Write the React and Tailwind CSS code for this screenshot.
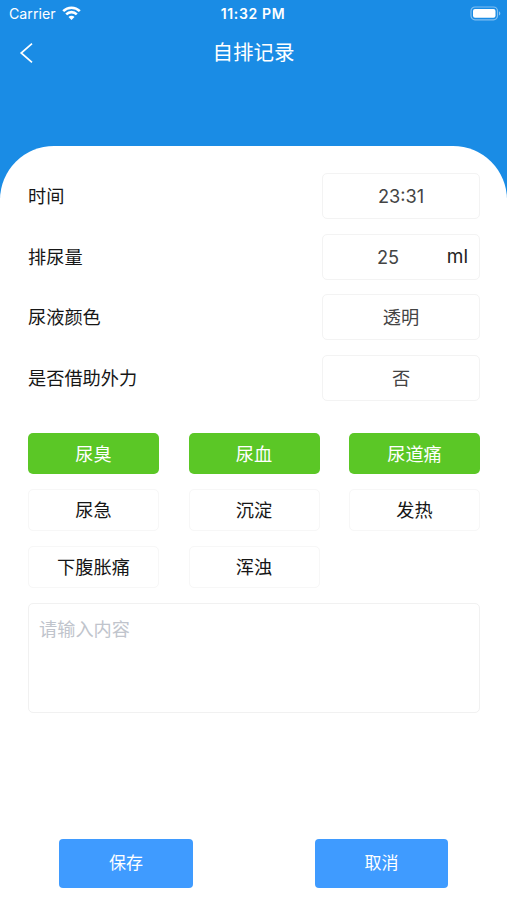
import clsx from "clsx";

const campos = [
  { label: "时间", valor: "23:31" },
  { label: "排尿量", valor: "25", unidade: "ml" },
  { label: "尿液颜色", valor: "透明" },
  { label: "是否借助外力", valor: "否" },
];

const sintomas = [
  { nome: "尿臭", ativo: true },
  { nome: "尿血", ativo: true },
  { nome: "尿道痛", ativo: true },
  { nome: "尿急" },
  { nome: "沉淀" },
  { nome: "发热" },
  { nome: "下腹胀痛" },
  { nome: "浑浊" },
];

function StatusBar() {
  return (
    <div className="grid grid-cols-3 items-center h-[28px] pl-[9px] pr-[6px] text-white">
      <div className="flex items-center gap-[6px]">
        <span className="text-[14.2px] leading-none">Carrier</span>
        <svg width="19" height="14" viewBox="0 0 19 14" className="-mt-[2px]" fill="none" stroke="currentColor" strokeWidth="2.6">
          <path d="M1.2 5.1a11.8 11.8 0 0 1 16.6 0" />
          <path d="M4.2 8.3a7.5 7.5 0 0 1 10.6 0" />
          <path d="M9.5 13.9 6.5 10.9a4.2 4.2 0 0 1 6 0z" fill="currentColor" stroke="none" />
        </svg>
      </div>
      <span className="-ml-[4px] text-center text-[14px] leading-none font-semibold tracking-[0.65px]">11:32 PM</span>
      <svg className="justify-self-end -mt-[2px]" width="31" height="15" viewBox="0 0 31 15" fill="none">
        <rect x="1" y="1" width="26.5" height="12.8" rx="4" stroke="#fff" strokeOpacity="0.45" strokeWidth="1.2" />
        <rect x="3" y="3" width="22.5" height="8.8" rx="2" fill="#fff" />
        <path d="M29 5.2c1.8.7 1.8 3.7 0 4.4z" fill="#fff" fillOpacity="0.5" />
      </svg>
    </div>
  );
}

export default function App() {
  return (
    <div className="h-[900px] w-[507px] overflow-hidden bg-white font-[Inter,'Noto_Sans_CJK_SC',sans-serif] text-[18.2px] text-[#161616]">
      {/* Header */}
      <header className="h-[198px] bg-[#1a8ce5]">
        <StatusBar />
        <div className="grid grid-cols-3 items-center h-[50px] pl-[19px] pr-[19px] text-white">
          <svg width="15" height="22" viewBox="0 0 15 22" fill="none" stroke="currentColor" strokeWidth="1.7">
            <path d="M13 1.6 2.2 11 13 20.4" />
          </svg>
          <h1 className="text-center text-[20.5px] leading-[50px]">自排记录</h1>
        </div>
      </header>

      <main className="-mt-[52px] h-[754px] rounded-t-[54px] bg-white pl-[28px] pr-[27px] pt-[27px]">
        {/* Campos */}
        <div className="flex flex-col gap-[14.5px]">
          {campos.map((c) => (
            <div key={c.label} className="flex items-center justify-between h-[46px]">
              <span className="leading-[46px]">{c.label}</span>
              <div className="flex items-center w-[158px] h-full rounded-[5px] border border-[#f3f3f3] pt-[2px] text-[#444]">
                {c.unidade && <span className="w-[24px]" />}
                <span className="flex-1 text-center">{c.valor}</span>
                {c.unidade && <span className="w-[50px] pr-[11px] pb-[1px] text-right text-[19px] text-[#222]">{c.unidade}</span>}
              </div>
            </div>
          ))}
        </div>

        {/* Sintomas */}
        <div className="mt-[31.5px] grid grid-cols-3 gap-x-[29.5px] gap-y-[15px]">
          {sintomas.map((s) => (
            <button
              key={s.nome}
              className={clsx(
                "rounded-[5px] text-center",
                s.ativo ? "mt-[1px] h-[41px] bg-[#5bc726] leading-[40px] text-white" : "h-[42px] border border-[#f7f7f7] bg-white leading-[40px]"
              )}
            >
              {s.nome}
            </button>
          ))}
        </div>

        <textarea
          placeholder="请输入内容"
          className="mt-[15px] block h-[110px] w-full resize-none rounded-[5px] border border-[#f1f1f1] px-[10px] pt-[12px] outline-none placeholder:text-[#c0c4cc]"
        />

        {/* Ações */}
        <div className="mt-[126px] flex justify-between pl-[31px] pr-[32px] text-[17px] text-white">
          <button className="h-[49px] w-[134px] rounded-[4px] bg-[#3f9bff]">保存</button>
          <button className="h-[49px] w-[133px] rounded-[4px] bg-[#3f9bff]">取消</button>
        </div>
      </main>
    </div>
  );
}
